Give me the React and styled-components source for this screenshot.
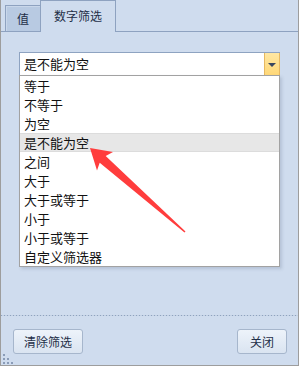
import React from "react";
import styled, { createGlobalStyle } from "styled-components";

const GlobalStyle = createGlobalStyle`
  html, body {
    margin: 0;
    padding: 0;
    background: #cfdcee;
  }
  * { box-sizing: border-box; }
`;

const FONT = `"Noto Sans CJK SC", "Liberation Sans", sans-serif`;

const Window = styled.div`
  position: relative;
  width: 299px;
  height: 366px;
  background: #cfdcee;
  border: 1px solid #9d9d9d;
  border-top: none;
  display: flex;
  flex-direction: column;
  font-family: ${FONT};
  overflow: hidden;
`;

const TabStrip = styled.div`
  height: 32px;
  flex: none;
  display: flex;
  align-items: flex-end;
  padding-left: 4px;
  border-bottom: 1px solid #8ea2c0;
`;

const Tab = styled.div`
  height: ${(p) => (p.$active ? "32px" : "26px")};
  width: ${(p) => (p.$active ? "76px" : "35px")};
  margin-bottom: ${(p) => (p.$active ? "-1px" : "0")};
  background: ${(p) => (p.$active ? "#cfdcee" : "#b8cae2")};
  border: 1px solid #8ea2c0;
  border-bottom: none;
  border-right: ${(p) => (p.$active ? "1px solid #8ea2c0" : "none")};
  box-shadow: ${(p) => (p.$active ? "none" : "inset 1px 1px 0 #c9d7ea")};
  display: flex;
  align-items: center;
  justify-content: center;
  padding-bottom: ${(p) => (p.$active ? "2px" : "0")};
  font-size: 12px;
  color: #1f2f48;
`;

const Body = styled.div`
  flex: 1;
  padding: 20px 18px 0 18px;
`;

const ComboWrap = styled.div`
  position: relative;
  width: 261px;
`;

const Combo = styled.div`
  height: 23px;
  display: flex;
  background: #fff;
  border: 1px solid #8ea3c1;
  border-bottom: none;
`;

const ComboText = styled.div`
  flex: 1;
  padding-left: 4px;
  font-size: 13px;
  line-height: 22px;
  color: #111;
`;

const ComboButton = styled.div`
  width: 16px;
  display: flex;
  align-items: center;
  justify-content: center;
  background: linear-gradient(#ffe7a2, #ffd878);
  border-left: 1px solid #e6b862;
  border-right: 1px solid #e6b862;
  margin-right: -1px;
`;

const Caret = styled.span`
  width: 0;
  height: 0;
  border-left: 4px solid transparent;
  border-right: 4px solid transparent;
  border-top: 4px solid #3a4760;
  margin-top: 1px;
`;

const DropList = styled.ul`
  position: absolute;
  top: 100%;
  left: 0;
  width: 261px;
  margin: 0;
  padding: 0;
  list-style: none;
  background: #fff;
  border: 1px solid #a2a2a2;
  box-shadow: 2px 2px 3px rgba(60, 80, 110, 0.18);
`;

const Item = styled.li`
  height: 19px;
  padding-left: 4px;
  font-size: 13px;
  line-height: 19px;
  color: #111;
  background: ${(p) => (p.$hover ? "#e7e7e7" : "transparent")};
  box-shadow: ${(p) =>
    p.$hover ? "inset 0 1px 0 #dcdcdc, inset 0 -1px 0 #dcdcdc" : "none"};
`;

const Divider = styled.div`
  height: 1px;
  flex: none;
  background-image: linear-gradient(90deg, #8ea2bf 50%, #c4d1e3 50%);
  background-size: 3px 1px;
`;

const Footer = styled.div`
  flex: none;
  height: 49px;
  padding: 13px 11px 11px 12px;
  display: flex;
  justify-content: space-between;
  align-items: flex-start;
`;

const Button = styled.button`
  width: ${(p) => p.$w}px;
  height: 25px;
  padding: 0;
  font-family: ${FONT};
  font-size: 12px;
  color: #1f2f48;
  background: linear-gradient(#edf3fa, #dae4f1);
  border: 1px solid #a6b6cc;
  border-radius: 3px;
`;

const Grip = styled.svg`
  position: absolute;
  left: 2px;
  bottom: 1px;
`;

const Arrow = styled.svg`
  position: absolute;
  left: -1px;
  top: 0;
  pointer-events: none;
`;

const options = [
  "等于",
  "不等于",
  "为空",
  "是不能为空",
  "之间",
  "大于",
  "大于或等于",
  "小于",
  "小于或等于",
  "自定义筛选器",
];

export default function App() {
  const selected = "是不能为空";
  return (
    <>
      <GlobalStyle />
      <Window>
        <TabStrip>
          <Tab>值</Tab>
          <Tab $active>数字筛选</Tab>
        </TabStrip>
        <Body>
          <ComboWrap>
            <Combo>
              <ComboText>{selected}</ComboText>
              <ComboButton>
                <Caret />
              </ComboButton>
            </Combo>
            <DropList>
              {options.map((o) => (
                <Item key={o} $hover={o === selected}>
                  {o}
                </Item>
              ))}
            </DropList>
          </ComboWrap>
        </Body>
        <Divider />
        <Footer>
          <Button $w={70}>清除筛选</Button>
          <Button $w={50}>关闭</Button>
        </Footer>
        <Grip width="12" height="10" viewBox="0 0 12 10">
          <g fill="#8a9cb8">
            <rect x="0" y="0" width="2" height="2" />
            <rect x="0" y="4" width="2" height="2" />
            <rect x="4" y="4" width="2" height="2" />
            <rect x="0" y="8" width="2" height="2" />
            <rect x="4" y="8" width="2" height="2" />
            <rect x="8" y="8" width="2" height="2" />
          </g>
        </Grip>
        <Arrow width="299" height="366" viewBox="0 0 299 366">
          <polygon
            fill="#ff3d3d"
            points="90,148 113,152 105.7,155.9 185.5,231.5 184.5,232.5 99.7,162.7 97,170.5"
          />
        </Arrow>
      </Window>
    </>
  );
}
